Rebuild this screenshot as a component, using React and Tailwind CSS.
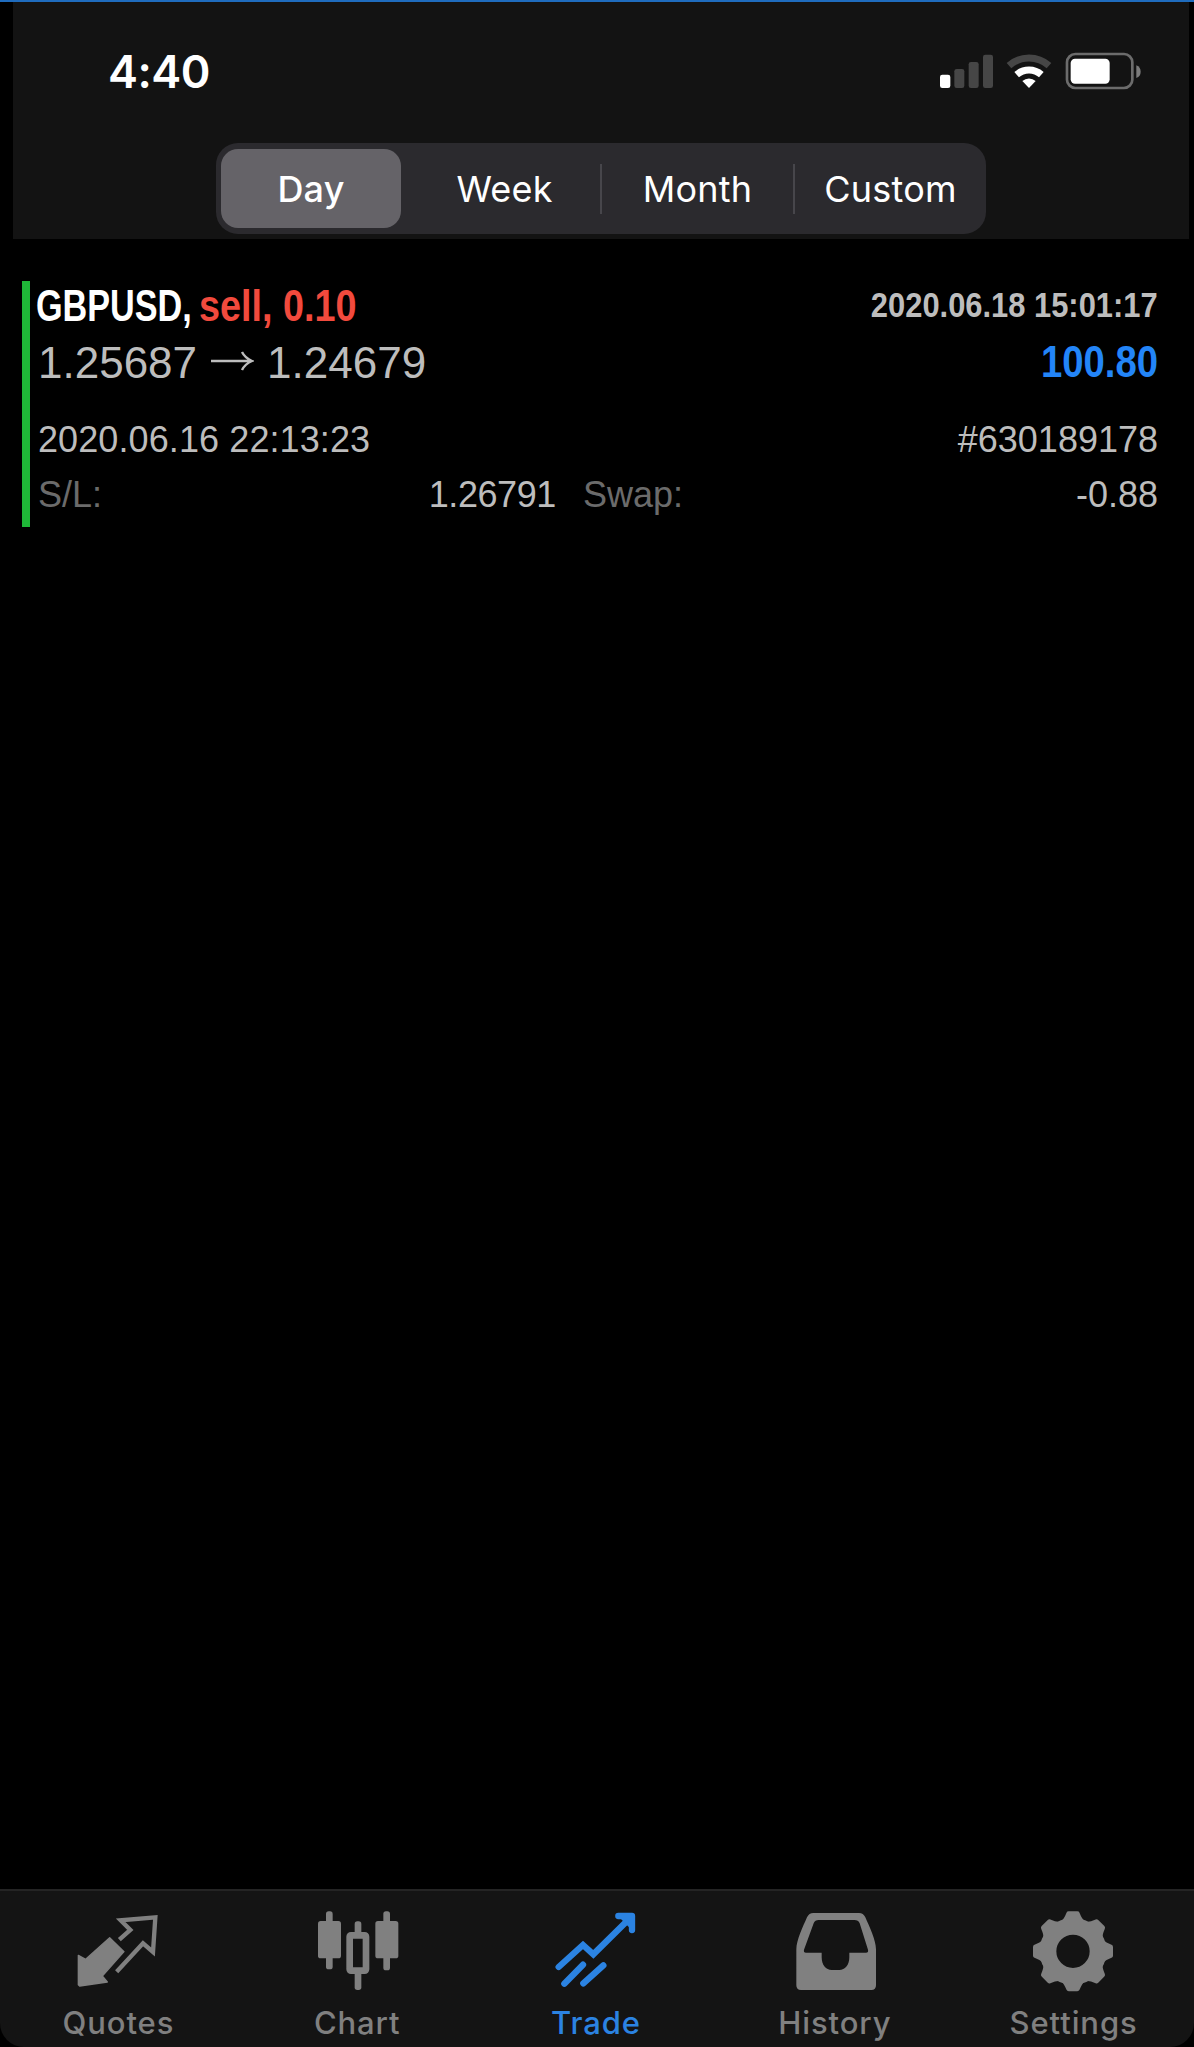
import { clsx } from "clsx";

const PERIODS = ["Day", "Week", "Month", "Custom"];

const trade = {
  symbol: "GBPUSD",
  side: "sell",
  volume: "0.10",
  openPrice: "1.25687",
  closePrice: "1.24679",
  openTime: "2020.06.16 22:13:23",
  closeTime: "2020.06.18 15:01:17",
  profit: "100.80",
  ticket: "#630189178",
  stopLoss: "1.26791",
  swap: "-0.88",
};

const StatusIcons = () => (
  <svg viewBox="0 0 618 126" className="w-[206px] h-[42px]" aria-hidden="true">
    <rect x="6" y="74" width="31" height="40" rx="7" fill="#fff" />
    <g fill="#464646">
      <rect x="49" y="57" width="30" height="57" rx="7" />
      <rect x="92" y="36" width="30" height="78" rx="7" />
      <rect x="135" y="14" width="30" height="100" rx="7" />
    </g>

    <path d="M213 47A90 90 0 0 1 333 47" fill="none" stroke="#464646" strokeWidth="21" />
    <path d="M236 74A56 56 0 0 1 310 74" fill="none" stroke="#fff" strokeWidth="21" />
    <path d="M273 114L253 93A30 30 0 0 1 293 93Z" fill="#fff" />

    <rect x="387" y="12" width="196" height="102" rx="25" fill="none" stroke="#6c6c6c" strokeWidth="8" />
    <rect x="398" y="26" width="117" height="75" rx="13" fill="#fff" />
    <path d="M595 46Q608 51 608 65T595 84Z" fill="#7c7c7c" />
  </svg>
);

const QuotesIcon = () => (
  <>
    <path
      d="M98 89L141 131L76 204L91 222L8 234L4 230V142L26 154Z"
      fill="currentColor"
      stroke="currentColor"
      strokeWidth="4"
      strokeLinejoin="round"
    />
    <path
      d="M127 95L160 66L131 37L235 28L228 132L198 106L119 191"
      fill="none"
      stroke="currentColor"
      strokeWidth="13"
    />
  </>
);

const ChartIcon = () => (
  <g fill="currentColor">
    <rect x="6" y="39" width="69" height="112" rx="8" />
    <rect x="30" y="10" width="20" height="174" rx="8" />
    <rect x="101" y="82" width="49" height="106" rx="4" fill="none" stroke="currentColor" strokeWidth="20" />
    <rect x="116" y="40" width="20" height="42" rx="8" />
    <rect x="116" y="188" width="20" height="58" rx="8" />
    <rect x="178" y="39" width="69" height="112" rx="8" />
    <rect x="202" y="10" width="20" height="177" rx="8" />
  </g>
);

const TradeIcon = () => (
  <g fill="none" stroke="currentColor" strokeWidth="19" strokeLinecap="round">
    <path d="M11 177L84 111L115 139L226 29" />
    <path d="M190 25H231V67Z" fill="currentColor" strokeWidth="0" />
    <path d="M190 24H231V66" strokeLinejoin="round" />
    <path d="M28 227L84 170" />
    <path d="M85 226L145 172" />
  </g>
);

const HistoryIcon = () => (
  <path
    fillRule="evenodd"
    fill="currentColor"
    d="M58 15H195Q208 15 214 28C226 56 246 96 246 124V232Q246 246 232 246H21Q7 246 7 232V124C7 96 27 56 39 28Q45 15 58 15Z
       M74 36Q63 36 59 46L30 125Q28 134 36 134H83V148C83 172 96 186 113 186H136C153 186 166 172 166 148V134H216Q224 134 222 125L197 46Q193 36 181 36Z"
  />
);

const SettingsIcon = () => (
  <g stroke="currentColor" fill="currentColor">
    <circle cx="120" cy="130" r="75" fill="none" strokeWidth="50" />
    {[0, 45, 90, 135, 180, 225, 270, 315].map((angle) => (
      <path
        key={angle}
        d="M91 43Q99 37 107 17H133Q141 37 149 43L138 60H102Z"
        transform={`rotate(${angle} 120 130)`}
        strokeWidth="14"
        strokeLinejoin="round"
      />
    ))}
  </g>
);

const TABS = [
  { label: "Quotes", icon: QuotesIcon },
  { label: "Chart", icon: ChartIcon },
  { label: "Trade", icon: TradeIcon },
  { label: "History", icon: HistoryIcon },
  { label: "Settings", icon: SettingsIcon },
];

const Header = ({ active }) => (
  <header className="ml-[13px] mr-[5px] h-[237px] bg-[#131313]">
    <div className="flex h-[141px] items-start justify-between pl-[95px] pr-[45px] pt-12">
      <span className="text-[45px] leading-[44px] font-semibold tracking-[-0.5px]">4:40</span>
      <StatusIcons />
    </div>

    <div className="ml-[203px] flex h-[91px] w-[770px] items-center rounded-[22px] bg-[#2b2a2e] px-[5px]">
      {PERIODS.map((period, i) => (
        <div key={period} className="flex items-center">
          {i > 0 && (
            <span className={clsx("h-[50px] w-[2px]", i > 1 ? "bg-[#47464b]" : "bg-transparent")} />
          )}
          <button
            type="button"
            className={clsx(
              "h-[79px] rounded-[17px] text-[36px] tracking-[0.2px]",
              i === 0 ? "mr-[6px] w-[180px]" : "w-[191px]",
              period === active ? "bg-[#656368] font-medium" : "font-normal"
            )}
          >
            {period}
          </button>
        </div>
      ))}
    </div>
  </header>
);

const TradeCard = () => (
  <section className="ml-[22px] mr-9 mt-[42px] flex h-[246px] whitespace-nowrap border-l-8 border-[#1fb838] pl-2 font-['Liberation_Sans',sans-serif] text-[#bdbdbd]">
    <div className="flex flex-1 flex-col">
      <div className="flex h-[50px] items-center justify-between">
        <div className="flex text-[45px] font-bold">
          <span className="-ml-[2px] -mr-[42px] origin-left scale-x-[0.76] text-white">{trade.symbol},</span>
          <span className="origin-left scale-x-[0.84] text-[#f24a3d]">{trade.side}, {trade.volume}</span>
        </div>
        <span className="origin-right scale-x-[0.87] text-[35.5px] font-bold">{trade.closeTime}</span>
      </div>

      <div className="flex h-16 items-center justify-between">
        <span className="flex items-center text-[44px] leading-[62px]">
          {trade.openPrice}
          <svg viewBox="0 0 44 20" className="mx-[13px] mb-1 h-5 w-11" fill="none" stroke="currentColor" strokeWidth="2.4">
            <path d="M1 10H42M32 1Q35 7 42 10Q35 13 32 19" />
          </svg>
          {trade.closePrice}
        </span>
        <span className="origin-right scale-x-[0.88] text-[43.5px] font-bold text-[#2385f8]">
          {trade.profit}
        </span>
      </div>

      <div className="mt-[17px] flex h-14 items-center justify-between text-[36px]">
        <span className="tracking-[0.1px]">{trade.openTime}</span>
        <span>{trade.ticket}</span>
      </div>

      <div className="flex h-[54px] items-center text-[36px]">
        <span className="text-[#6b6b6b]">S/L:</span>
        <span className="ml-auto tracking-[-0.4px]">{trade.stopLoss}</span>
        <div className="ml-[27px] flex w-[575px] justify-between">
          <span className="text-[#6b6b6b]">Swap:</span>
          <span>{trade.swap}</span>
        </div>
      </div>
    </div>
  </section>
);

const TabBar = ({ active }) => (
  <nav className="mt-auto grid h-[158px] grid-cols-5 rounded-b-[24px] border-t-2 border-[#242424] bg-[#141414]">
    {TABS.map(({ label, icon: Icon }) => (
      <button
        key={label}
        type="button"
        className={clsx(
          "flex flex-col items-center pt-[17px]",
          label === active ? "text-[#2b83e2]" : "text-[#808080]"
        )}
      >
        <svg viewBox="0 0 252 252" className="size-[84px]" aria-hidden="true">
          <Icon />
        </svg>
        <span className="mt-[13px] mr-[2px] text-[31px] leading-9 font-medium tracking-[0.9px]">{label}</span>
      </button>
    ))}
  </nav>
);

const App = () => (
  <div className="flex h-[2047px] w-[1194px] flex-col overflow-hidden border-t-2 border-[#1f6cbe] bg-black font-[Inter,sans-serif] text-white">
    <Header active="Day" />
    <TradeCard />
    <TabBar active="Trade" />
  </div>
);

export default App;
